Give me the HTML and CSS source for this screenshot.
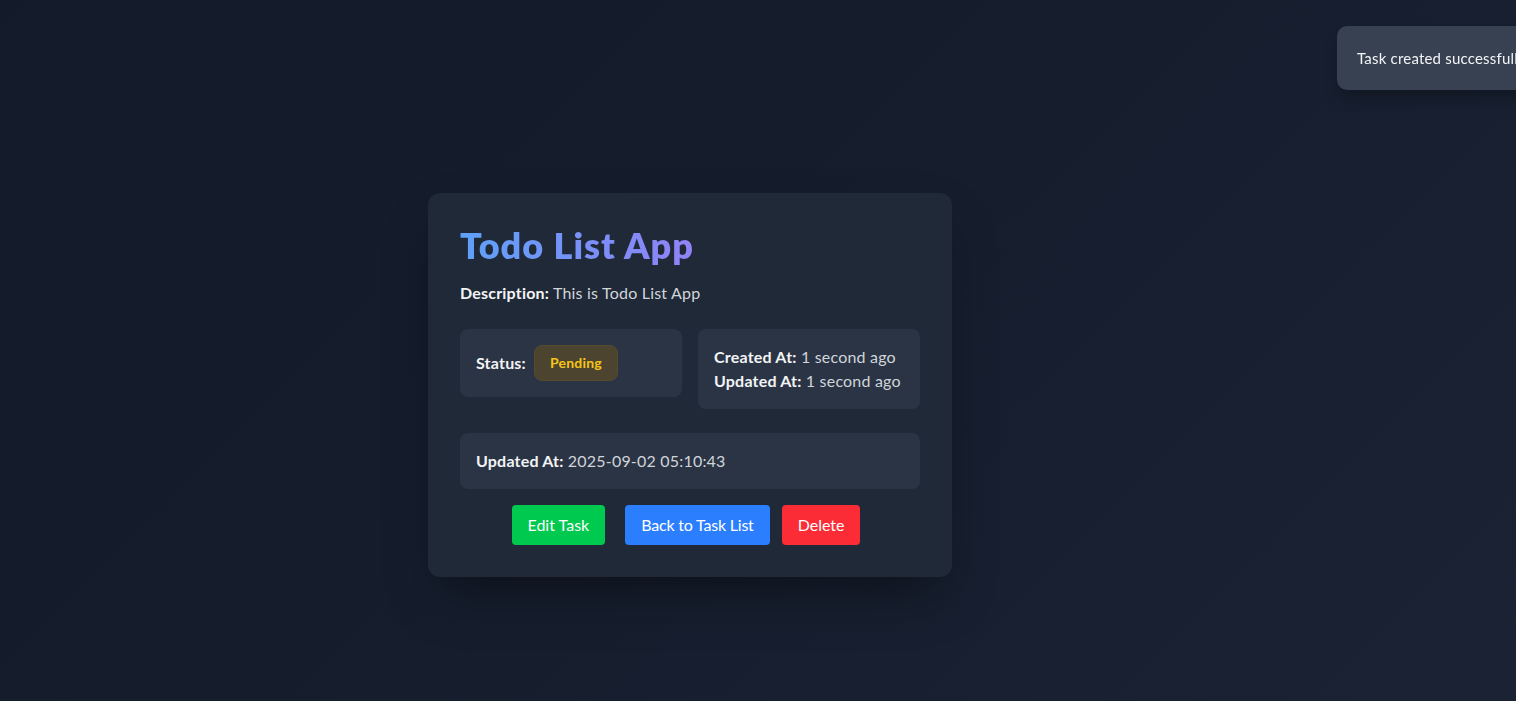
FILE: index.html
```html
<!DOCTYPE html>
<html lang="en">
<head>
<meta charset="utf-8">
<title>Todo List App</title>
<link rel="stylesheet" href="styles.css">
</head>
<body>
<main class="page">
  <section class="card">
    <h1 class="title">Todo List App</h1>
    <p class="desc"><strong>Description:</strong> This is Todo List App</p>
    <div class="grid">
      <div class="box status-box">
        <strong>Status:</strong>
        <span class="badge">Pending</span>
      </div>
      <div class="box">
        <div><strong>Created At:</strong> 1 second ago</div>
        <div><strong>Updated At:</strong> 1 second ago</div>
      </div>
    </div>
    <div class="box wide">
      <strong>Updated At:</strong> 2025-09-02 05:10:43
    </div>
    <div class="actions">
      <a class="btn btn-green edit">Edit Task</a>
      <a class="btn btn-blue back">Back to Task List</a>
      <button class="btn btn-red">Delete</button>
    </div>
  </section>
</main>
<div class="toast">Task created successfully!</div>
</body>
</html>
```
FILE: styles.css
```css
* { box-sizing: border-box; }
html, body { margin: 0; height: 100%; }
body {
  font-family: Lato, "Open Sans", sans-serif;
  color: #e5e7eb;
  background: linear-gradient(135deg, #131a29 0%, #161e2e 50%, #1a2233 100%);
  overflow: hidden;
  font-size: 16px;
  line-height: 24px;
  letter-spacing: 0.2px;
}
.page {
  display: flex;
  align-items: flex-start;
  padding: 193px 0 0 428px;
}
.card {
  width: 524px;
  background: #1f2937;
  border-radius: 12px;
  padding: 32px;
  box-shadow: 0 25px 50px -12px rgba(0,0,0,0.45);
}
.title {
  margin: 0 0 16px;
  font-size: 36px;
  line-height: 40px;
  font-weight: 800;
  letter-spacing: 1px;
  display: inline-block;
  background: linear-gradient(90deg, #5ea1f8, #9182f7);
  -webkit-background-clip: text;
  background-clip: text;
  color: transparent;
}
.desc { margin: 0 0 24px; color: #d1d5db; }
strong { color: #f3f4f6; font-weight: 700; }
.grid {
  display: grid;
  grid-template-columns: 1fr 1fr;
  gap: 16px;
  align-items: start;
  margin-bottom: 24px;
}
.box {
  background: #2a3444;
  border-radius: 8px;
  padding: 16px;
  color: #d1d5db;
}
.status-box { display: flex; align-items: center; gap: 8px; }
.badge {
  display: inline-block;
  padding: 7px 15px;
  font-size: 14px;
  line-height: 20px;
  font-weight: 700;
  color: #f5c518;
  background: #4d4430;
  border: 1px solid #554b2f;
  border-radius: 8px;
}
.wide { margin-bottom: 16px; }
.actions {
  display: flex;
  justify-content: center;
  gap: 12px;
  padding-right: 8px;
}
.edit { margin-right: 8px; }
.btn {
  font: inherit;
  letter-spacing: 0;
  border: 0;
  color: #fff;
  padding: 8px 16px;
  border-radius: 4px;
  line-height: 24px;
  text-decoration: none;
  cursor: pointer;
}
.back { letter-spacing: -0.2px; }
.btn-green { background: #00c950; }
.btn-blue { background: #2b7fff; }
.btn-red { background: #fb2c36; }
.toast {
  position: fixed;
  top: 26px;
  left: 1337px;
  width: 260px;
  height: 64px;
  padding: 0 20px;
  display: flex;
  align-items: center;
  background: #374151;
  border-radius: 10px;
  color: #f3f4f6;
  font-size: 15px;
  white-space: nowrap;
  box-shadow: 0 10px 15px -3px rgba(0,0,0,0.3);
}
```
